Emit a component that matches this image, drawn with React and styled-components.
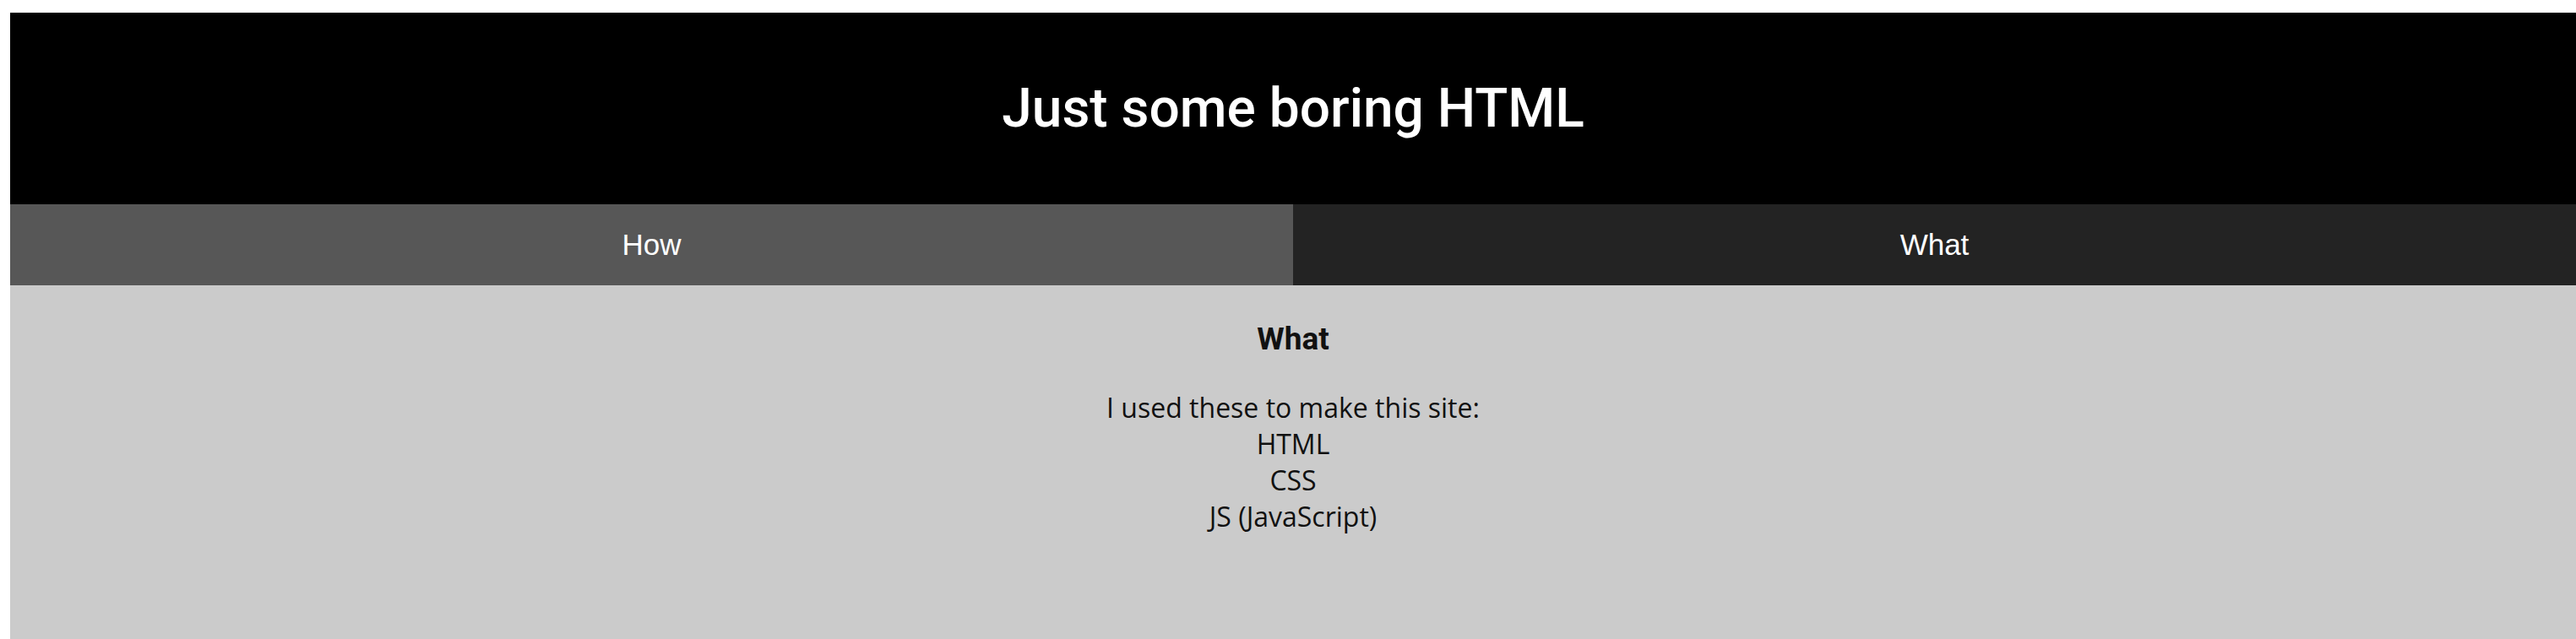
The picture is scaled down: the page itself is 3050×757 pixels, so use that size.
import React from "react";
import styled, { createGlobalStyle } from "styled-components";

const GlobalStyle = createGlobalStyle`
  html, body {
    margin: 0;
    padding: 0;
  }
  body {
    margin: 15px 0 0 12px;
    background: #ffffff;
    font-family: "Open Sans", "Liberation Sans", sans-serif;
  }
`;

const Page = styled.div`
  display: flex;
  flex-direction: column;
  min-height: calc(100vh - 15px);
`;

const Header = styled.header`
  height: 227px;
  background: #000000;
  display: flex;
  align-items: center;
  justify-content: center;
`;

const Title = styled.h1`
  margin: 0;
  color: #ffffff;
  font-family: Roboto, "Liberation Sans", sans-serif;
  font-weight: 500;
  font-size: 64px;
  line-height: 1;
`;

const Tabs = styled.nav`
  display: flex;
  height: 96px;
`;

const Tab = styled.div`
  flex: 1 1 0;
  background: ${props => (props.$active ? "#575757" : "#232323")};
  color: #ffffff;
  display: flex;
  align-items: center;
  justify-content: center;
  font-family: "Liberation Sans", Arial, sans-serif;
  font-size: 35px;
  cursor: pointer;
`;

const Content = styled.main`
  flex: 1;
  background: #cbcbcb;
  color: #111111;
  text-align: center;
  padding-top: 42px;
`;

const Heading = styled.h2`
  margin: 0 0 38px;
  font-family: Roboto, "Liberation Sans", sans-serif;
  font-weight: 700;
  font-size: 37px;
`;

const Text = styled.p`
  margin: 0;
  font-family: "Open Sans", sans-serif;
  font-size: 32px;
`;

export default function App() {
  return (
    <>
      <GlobalStyle />
      <Page>
        <Header>
          <Title>Just some boring HTML</Title>
        </Header>
        <Tabs>
          <Tab $active>How</Tab>
          <Tab>What</Tab>
        </Tabs>
        <Content>
          <Heading>What</Heading>
          <Text>
            I used these to make this site:
            <br />
            HTML
            <br />
            CSS
            <br />
            JS (JavaScript)
          </Text>
        </Content>
      </Page>
    </>
  );
}
